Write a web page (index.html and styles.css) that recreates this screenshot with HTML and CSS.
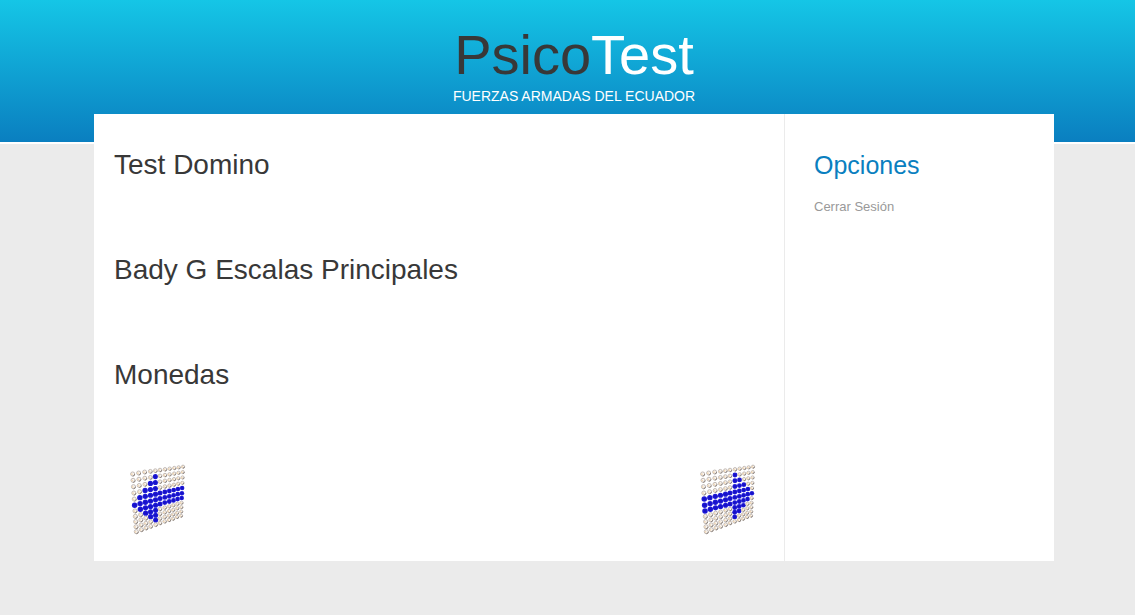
FILE: index.html
```html
<!DOCTYPE html>
<html lang="es">
<head>
<meta charset="utf-8">
<title>PsicoTest</title>
<link rel="stylesheet" href="styles.css">
</head>
<body>
<div class="wrapper">
  <header class="banner">
    <h1 class="logo">Psico<span class="logo-accent">Test</span></h1>
    <p class="tagline">FUERZAS ARMADAS DEL ECUADOR</p>
  </header>
  <div class="page">
    <main class="content">
      <h2 class="test-title">Test Domino</h2>
      <h2 class="test-title">Bady G Escalas Principales</h2>
      <h2 class="test-title">Monedas</h2>
      <nav class="pager" aria-label="Navegación">
        <a href="#" aria-label="Anterior"><svg class="arrow" data-direction="left" viewBox="0 0 90 90"></svg></a>
        <a href="#" aria-label="Siguiente"><svg class="arrow" data-direction="right" viewBox="0 0 90 90"></svg></a>
      </nav>
    </main>
    <aside class="sidebar">
      <h2 class="sidebar-title">Opciones</h2>
      <ul class="menu">
        <li><a class="menu-link" href="#">Cerrar Sesión</a></li>
      </ul>
    </aside>
  </div>
</div>
<script src="arrows.js"></script>
</body>
</html>
```
FILE: styles.css
```css
body {
  margin: 0;
  padding-left: 13px;
  font-family: "Liberation Sans", Arial, sans-serif;
  color: #383838;
  background-color: #ebebeb;
  background-image: linear-gradient(#15c6e6, #0a7fc0), linear-gradient(#fff, #fff);
  background-size: 100% 142px, 100% 144px;
  background-repeat: no-repeat;
}

.wrapper {
  max-width: 960px;
  margin: 0 auto;
}

.banner {
  padding: 23px 0 9px;
  text-align: center;
}

.logo {
  margin: 0;
  font-size: 56px;
  font-weight: 400;
  line-height: 64px;
}

.logo-accent {
  color: #fff;
}

.tagline {
  margin: 0;
  font-size: 14px;
  line-height: 18px;
  color: #fff;
}

.page {
  display: grid;
  grid-template-columns: minmax(0, 690px) minmax(200px, 270px);
  background: #fff;
}

.content {
  padding: 35px 20px 17px;
}

.test-title {
  margin: 0 0 73px;
  font-size: 28px;
  font-weight: 400;
  line-height: 32px;
}

.pager {
  display: flex;
  justify-content: space-between;
  margin-top: -10px;
}

.arrow {
  display: block;
  width: 90px;
  height: 90px;
}

.pager a:last-child {
  margin-right: -10px;
}

.sidebar {
  padding: 35px 20px 20px 29px;
  border-left: 1px solid #ebebeb;
}

.sidebar-title {
  margin: 0 0 16px;
  font-size: 25px;
  font-weight: 400;
  line-height: 32px;
  color: #0a7fc0;
}

.menu {
  margin: 0;
  padding: 0;
  list-style: none;
}

.menu-link {
  font-size: 13px;
  line-height: 18px;
  color: #999;
  text-decoration: none;
}

.coin {
  fill: #f7f4f1;
  stroke: #c3bab4;
  stroke-width: 1;
}

.coin-shade {
  fill: none;
  stroke: #8f8680;
  stroke-width: 1;
}

.coin-shine {
  fill: #f3d9b6;
}

.bead {
  fill: #1d18d6;
}

.bead-core {
  fill: #1712c4;
}
```
FILE: arrows.js
```js
// Boards of beads seen in perspective, with an arrow picked out in blue.
const topX = [67, 85, 103, 120, 135, 149, 164, 178, 192, 205, 218];
const bottomX = [78, 93, 107, 121, 136, 149, 163, 176, 188, 200, 212];
const topY = [72, 69, 66, 64, 62, 60, 58, 56, 54, 52, 50];
const bottomY = [245, 239, 234, 229, 224, 219, 214, 210, 206, 201, 197];
const depth = [0, 0.11, 0.22, 0.33, 0.435, 0.54, 0.64, 0.735, 0.825, 0.915, 1];

function shape(tag, attributes) {
  const node = document.createElementNS("http://www.w3.org/2000/svg", tag);
  for (const [name, value] of Object.entries(attributes)) {
    node.setAttribute(name, value);
  }
  return node;
}

function circle(cx, cy, r, name) {
  return shape("circle", { cx, cy, r, class: name });
}

document.querySelectorAll(".arrow").forEach((svg) => {
  for (let row = 0; row < 11; row++) {
    for (let col = 0; col < 11; col++) {
      const x = (topX[col] + (bottomX[col] - topX[col]) * depth[row] - 11) / 3;
      const y = (topY[col] + (bottomY[col] - topY[col]) * depth[row] - 12) / 3;
      const fromTip = svg.dataset.direction === "left" ? col : 10 - col;
      const blue = Math.abs(row - 5) <= (fromTip <= 4 ? fromTip : 1);
      const size = 2.75 - col * 0.05;
      if (blue) {
        svg.append(circle(x, y, size, "bead"), circle(x, y, size * 0.5, "bead-core"));
      } else {
        const r = size - 0.7;
        svg.append(
          circle(x, y, r, "coin"),
          circle(x - 0.8, y + 0.2, 0.9, "coin-shine"),
          shape("path", { d: `M${x + r} ${y}A${r} ${r} 0 0 1 ${x} ${y + r}`, class: "coin-shade" })
        );
      }
    }
  }
});
```
